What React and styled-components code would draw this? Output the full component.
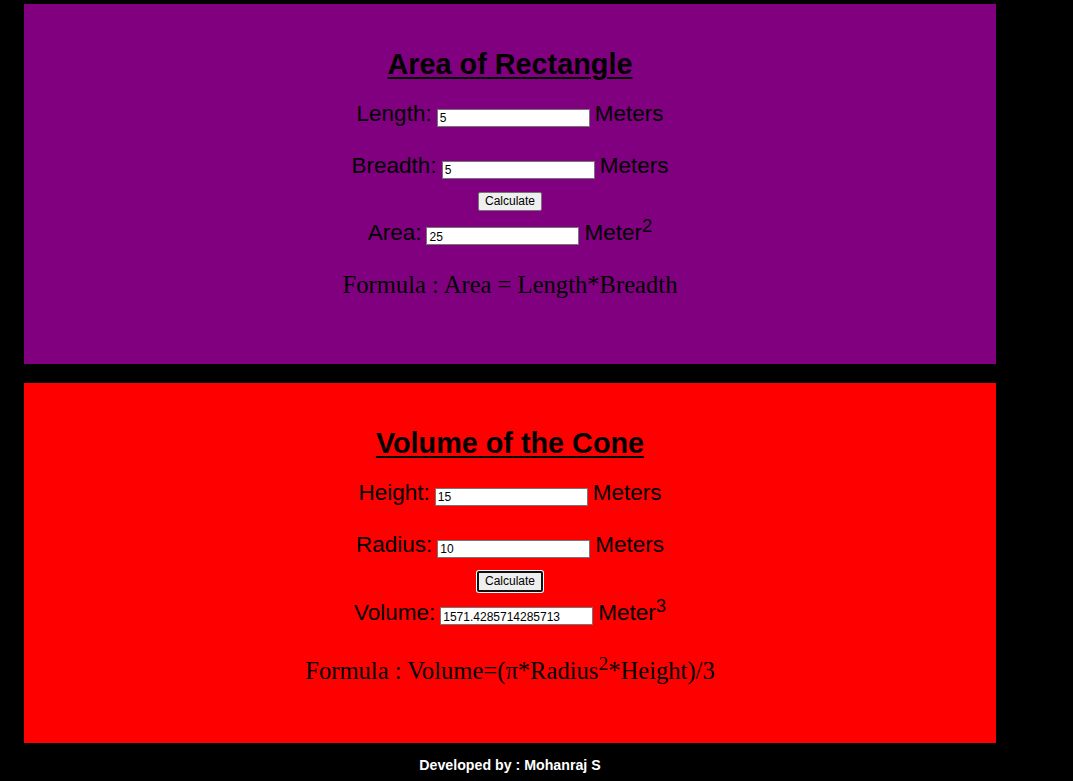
import React, { useState } from 'react'
import styled, { createGlobalStyle } from 'styled-components'

const GlobalStyle = createGlobalStyle`
  html, body {
    margin: 0;
    padding: 0;
    background: #000;
  }
  body {
    font-family: 'Liberation Sans', Arial, sans-serif;
  }
`

const Page = styled.main`
  width: 972px;
  padding: 4px 0 0 24px;
  display: flex;
  flex-direction: column;
  gap: 19px;
`

const Panel = styled.section`
  height: 360px;
  box-sizing: border-box;
  padding-top: 44px;
  background: ${(props) => props.$bg};
  display: flex;
  flex-direction: column;
  align-items: center;
  color: #000;
`

const Title = styled.h2`
  margin: 0;
  font-size: 28.8px;
  line-height: 33px;
  font-weight: bold;
  text-decoration: underline;
  text-decoration-thickness: 2px;
  text-underline-offset: 3px;
`

const Row = styled.div`
  display: flex;
  align-items: baseline;
  justify-content: center;
  gap: 5px;
  font-size: 22.5px;
  line-height: 26px;
  margin-top: ${(props) => props.$top}px;
  sup {
    line-height: 0;
    font-size: 18.5px;
  }
`

const Field = styled.input`
  width: 153px;
  height: 18px;
  box-sizing: border-box;
  padding: 1px 2px 0;
  border: 1px solid #767676;
  border-radius: 0;
  background: #fff;
  font-family: 'Liberation Sans', Arial, sans-serif;
  font-size: 12px;
  color: #000;
  outline: none;
  position: relative;
  top: 1px;
`

const Button = styled.button`
  margin-top: 12.7px;
  height: ${(props) => (props.$focused ? 21 : 19)}px;
  box-sizing: border-box;
  padding: 0 6px;
  font-family: 'Liberation Sans', Arial, sans-serif;
  font-size: 12px;
  color: #000;
  background: #efefef;
  border: ${(props) => (props.$focused ? '2px solid #101010' : '1px solid #767676')};
  border-radius: 2px;
  box-shadow: ${(props) => (props.$focused ? '0 0 0 1px #fff' : 'none')};
  outline: none;
  cursor: pointer;
`

const Formula = styled.p`
  margin: ${(props) => props.$top}px 0 0;
  font-family: 'Liberation Serif', 'Times New Roman', serif;
  font-size: 24.6px;
  line-height: 28px;
  sup {
    font-size: 19.5px;
  }
`

const Footer = styled.footer`
  width: 972px;
  margin: 14px 0 0 24px;
  text-align: center;
  color: #fff;
  font-weight: bold;
  font-size: 14.2px;
  line-height: 16px;
`

function Rectangle() {
  const [length, setLength] = useState('5')
  const [breadth, setBreadth] = useState('5')
  const [area, setArea] = useState('25')

  return (
    <Panel $bg='#800080'>
      <Title>Area of Rectangle</Title>
      <Row $top={20}>
        <span>Length:</span>
        <Field value={length} onChange={(e) => setLength(e.target.value)} />
        <span>Meters</span>
      </Row>
      <Row $top={26}>
        <span>Breadth:</span>
        <Field value={breadth} onChange={(e) => setBreadth(e.target.value)} />
        <span>Meters</span>
      </Row>
      <Button onClick={() => setArea(String(Number(length) * Number(breadth)))}>Calculate</Button>
      <Row $top={9.3}>
        <span>Area:</span>
        <Field value={area} readOnly />
        <span>
          Meter<sup>2</sup>
        </span>
      </Row>
      <Formula $top={25}>Formula : Area = Length*Breadth</Formula>
    </Panel>
  )
}

function Cone() {
  const [height, setHeight] = useState('15')
  const [radius, setRadius] = useState('10')
  const [volume, setVolume] = useState('1571.4285714285713')

  function calculate() {
    const r = Number(radius)
    setVolume(String(((22 / 7) * r * r * Number(height)) / 3))
  }

  return (
    <Panel $bg='#ff0000'>
      <Title>Volume of the Cone</Title>
      <Row $top={20}>
        <span>Height:</span>
        <Field value={height} onChange={(e) => setHeight(e.target.value)} />
        <span>Meters</span>
      </Row>
      <Row $top={26}>
        <span>Radius:</span>
        <Field value={radius} onChange={(e) => setRadius(e.target.value)} />
        <span>Meters</span>
      </Row>
      <Button $focused onClick={calculate}>
        Calculate
      </Button>
      <Row $top={8.3}>
        <span>Volume:</span>
        <Field value={volume} readOnly />
        <span>
          Meter<sup>3</sup>
        </span>
      </Row>
      <Formula $top={24}>
        Formula : Volume=(π*Radius<sup>2</sup>*Height)/3
      </Formula>
    </Panel>
  )
}

export default function App() {
  return (
    <>
      <GlobalStyle />
      <Page>
        <Rectangle />
        <Cone />
      </Page>
      <Footer>Developed by : Mohanraj S</Footer>
    </>
  )
}
